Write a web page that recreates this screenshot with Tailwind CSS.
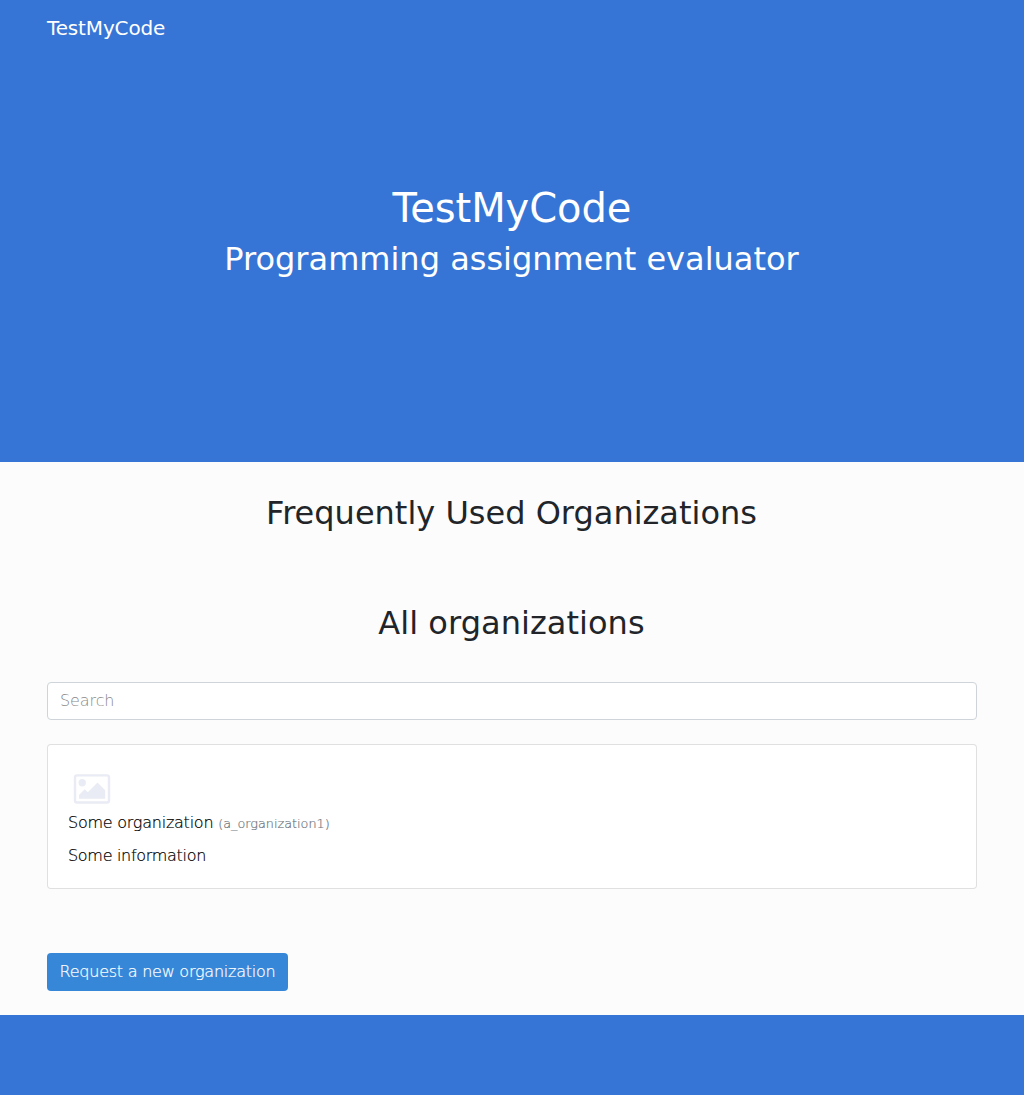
<!DOCTYPE html>
<html lang="en">
<head>
<meta charset="utf-8">
<title>TestMyCode</title>
<script src="https://cdn.jsdelivr.net/npm/@tailwindcss/browser@4"></script>
</head>
<body class="min-h-screen bg-[#3675d6] font-['DejaVu_Sans',sans-serif] text-base leading-6 font-extralight text-black">
<header class="h-[462px] text-white">
<nav class="flex h-14 items-center px-[47px]"><a class="text-xl font-normal tracking-[-0.15px]">TestMyCode</a></nav>
<div class="pt-32 text-center font-normal">
<h1 class="mb-2 text-[40px] leading-[48px] tracking-[-0.05px]">TestMyCode</h1>
<h2 class="pr-px text-[32px] leading-[38px]">Programming assignment evaluator</h2>
</div>
</header>
<main class="h-[553px] bg-[#fcfcfc] px-[47px] pt-8">
<h2 class="pr-px text-center text-[32px] leading-[38px] font-normal text-[#212529]">Frequently Used Organizations</h2>
<h2 class="mt-[72px] pr-px text-center text-[32px] leading-[38px] font-normal tracking-[0.05px] text-[#212529]">All organizations</h2>
<input class="mt-10 block h-[38px] w-full rounded border border-[#ced4da] bg-white px-3 pb-0.5 font-extralight tracking-[-0.1px] placeholder:text-[#888]" placeholder="Search">
<section class="mt-6 h-[145px] rounded border border-black/12 bg-white px-5 pt-5">
<svg class="h-12 w-12" viewBox="0 0 48 48" fill="#e9ecf4"><path fill-rule="evenodd" d="M9 9.2H39Q42.2 9.2 42.2 12.2V35.8Q42.2 38.8 39 38.8H9Q5.8 38.8 5.8 35.8V12.2Q5.8 9.2 9 9.2ZM9 11.6Q8.2 11.6 8.2 12.4V35.4Q8.2 36.2 9 36.2H39Q39.8 36.2 39.8 35.4V12.4Q39.8 11.6 39 11.6Z"/><circle cx="14.2" cy="17.8" r="3.7"/><path d="M11 33.8V30L16.7 24.3L19.8 27.3L29.5 17.5L37.2 25.3V33.8Z"/></svg>
<p class="-mt-[2px] tracking-[-0.24px] [-webkit-text-stroke:0.2px]">Some organization <small class="text-[12.8px] tracking-normal text-[#6c757d]">(a_organization1)</small></p>
<p class="mt-2 tracking-[-0.3px] [-webkit-text-stroke:0.2px]">Some information</p>
</section>
<button class="mt-16 h-[38px] w-[241px] rounded bg-[#3787d8] font-extralight tracking-[-0.24px] text-white [-webkit-text-stroke:0.2px]">Request a new organization</button>
</main>
</body>
</html>
